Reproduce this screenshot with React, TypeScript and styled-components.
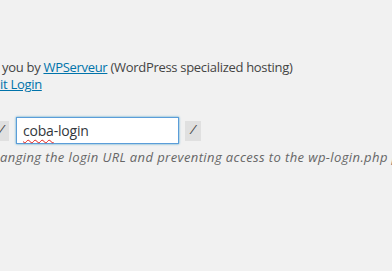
import React from "react";
import styled, { createGlobalStyle } from "styled-components";

const Global = createGlobalStyle`
  html, body {
    margin: 0;
    padding: 0;
    background: #f1f1f1;
    overflow: hidden;
  }
  body {
    font-family: "Open Sans", "Noto Sans", sans-serif;
    font-size: 13px;
    color: #444;
  }
`;

const Page = styled.div`
  width: 392px;
  height: 271px;
  padding-top: 59px;
  box-sizing: border-box;
  overflow: hidden;
`;

const Credits = styled.p`
  margin: 0;
  line-height: 17px;
  white-space: nowrap;
  letter-spacing: -0.3px;
`;

const Line = styled.span<{ $indent?: number }>`
  display: block;
  padding-left: ${(p) => p.$indent || 0}px;
`;

const Link = styled.a`
  color: #0073aa;
  text-decoration: underline;
`;

const FieldRow = styled.div`
  display: flex;
  align-items: center;
  gap: 6px;
  margin-top: 24px;
  white-space: nowrap;
`;

const Code = styled.code<{ $clip?: boolean }>`
  display: inline-flex;
  align-items: center;
  justify-content: center;
  height: 20px;
  width: ${(p) => (p.$clip ? 9 : 16)}px;
  padding-right: ${(p) => (p.$clip ? 6 : 0)}px;
  box-sizing: border-box;
  background: rgba(0, 0, 0, 0.07);
  font-family: "Liberation Mono", monospace;
  font-style: italic;
  font-size: 12px;
  color: #444;
`;

const Input = styled.div`
  width: 163px;
  height: 27px;
  margin-left: 1px;
  box-sizing: border-box;
  border: 1px solid #5b9dd9;
  box-shadow: 0 0 2px rgba(30, 140, 190, 0.8);
  background: #fff;
  padding: 0 6px;
  display: flex;
  align-items: center;
  font-size: 14px;
  letter-spacing: -0.2px;
  color: #32373c;
`;

const Misspelled = styled.span`
  text-decoration: underline wavy #e0201a;
  text-decoration-thickness: 1px;
  text-underline-offset: 3px;
`;

const Description = styled.p`
  margin: 5px 0 0;
  font-style: italic;
  color: #666;
  line-height: 17px;
  letter-spacing: 0.4px;
  white-space: nowrap;
`;

export default function App() {
  return (
    <>
      <Global />
      <Page>
        <Credits>
          <Line $indent={2}>
            {" "}you by <Link href="#">WPServeur</Link> (WordPress specialized
            hosting)
          </Line>
          <Line>
            <Link href="#">it Login</Link>
          </Line>
        </Credits>
        <FieldRow>
          <Code $clip>/</Code>
          <Input>
            <Misspelled>coba</Misspelled>-login
          </Input>
          <Code>/</Code>
        </FieldRow>
        <Description>
          anging the login URL and preventing access to the wp-login.php page
          and the wp-admin directory
        </Description>
      </Page>
    </>
  );
}
